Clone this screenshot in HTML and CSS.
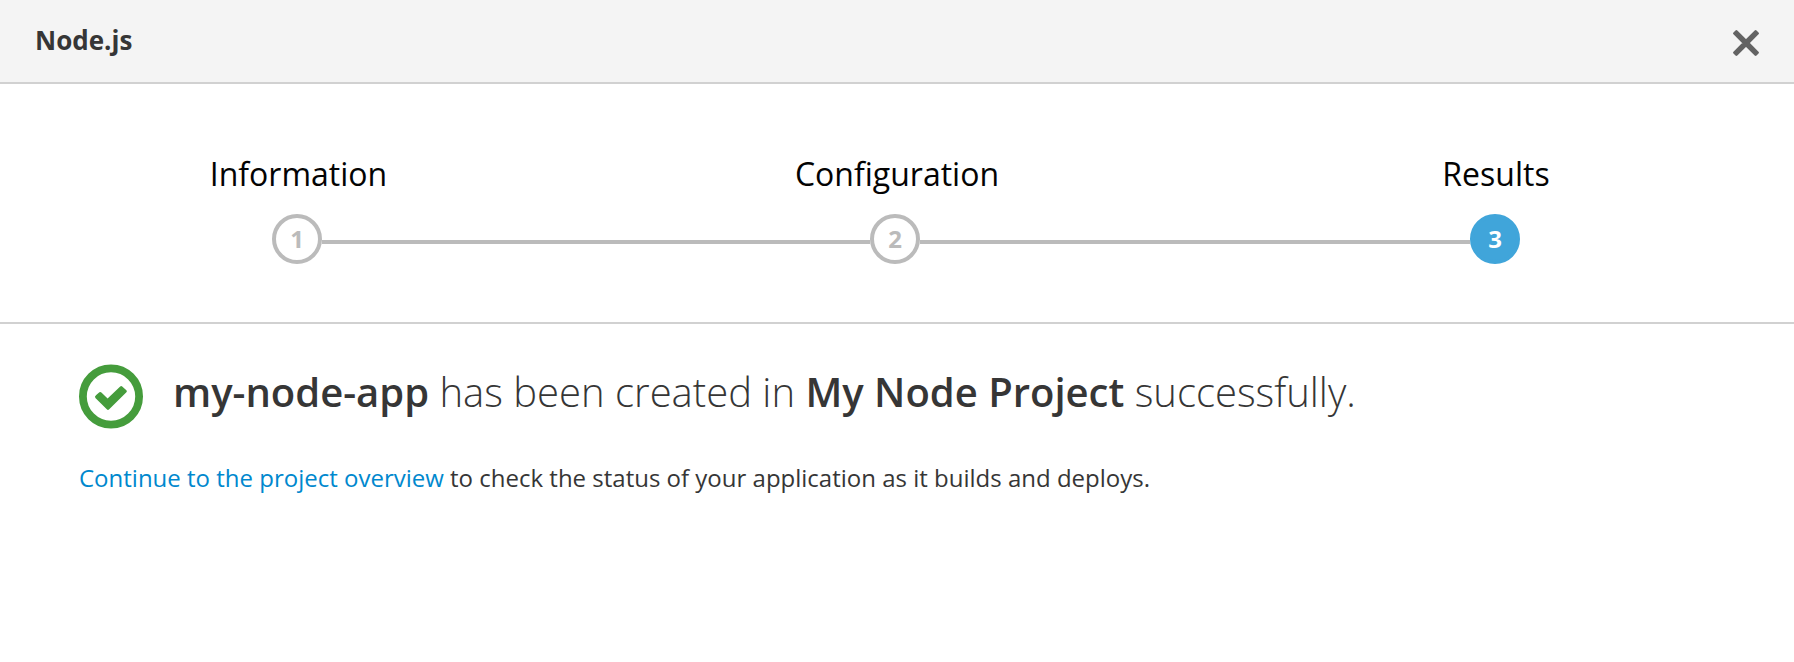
FILE: index.html
```html
<!DOCTYPE html>
<html lang="en">
<head>
<meta charset="utf-8">
<title>Node.js</title>
<link rel="stylesheet" href="styles.css">
</head>
<body>
<div class="modal">
  <header class="modal-header">
    <h1 class="modal-title">Node.js</h1>
    <button class="close" aria-label="Close">
      <svg width="26" height="26" viewBox="0 0 26 26"><path d="M3.4 1.4L13 11L22.600 1.400L24.600 3.400L15 13L24.600 22.600L22.600 24.600L13 15L3.400 24.600L1.400 22.600L11 13L1.400 3.400Z" fill="#636363" stroke="#636363" stroke-width="2.600" stroke-linejoin="round"/></svg>
    </button>
  </header>
  <ol class="steps">
    <li class="step first">
      <span class="step-label">Information</span>
      <div class="track"><i></i><span class="badge">1</span><i class="line"></i></div>
    </li>
    <li class="step">
      <span class="step-label">Configuration</span>
      <div class="track"><i class="line"></i><span class="badge">2</span><i class="line"></i></div>
    </li>
    <li class="step active">
      <span class="step-label">Results</span>
      <div class="track"><i class="line"></i><span class="badge">3</span><i></i></div>
    </li>
  </ol>
  <main class="results">
    <div class="message">
      <svg class="ok" width="64" height="65" viewBox="0 -0.5 64 65">
        <circle cx="32" cy="32" r="28.1" fill="none" stroke="#459c3c" stroke-width="7.8"/>
        <path d="M17.2 30.6L20.4 27.8Q21.4 27 22.4 27.9L28.6 34L41.2 21.9Q42.2 21 43.2 21.9L47.4 25.8Q48.4 26.8 47.4 27.8L30.2 44.8Q29 46 27.8 44.8L16.4 33.6Q15.2 32.2 17.2 30.6Z" fill="#459c3c"/>
      </svg>
      <h2 class="heading"><strong>my-node-app</strong> has been created in <strong>My Node Project</strong> successfully.</h2>
    </div>
    <p class="next"><a href="#">Continue to the project overview</a> to check the status of your application as it builds and deploys.</p>
  </main>
</div>
</body>
</html>
```
FILE: styles.css
```css
* { box-sizing: border-box; }
body {
  margin: 0;
  background: #fff;
  color: #363636;
  font-family: "Open Sans", sans-serif;
}
.modal { height: 662px; overflow: hidden; }
.modal-header {
  display: flex;
  justify-content: space-between;
  align-items: flex-start;
  height: 84px;
  padding: 22px 35px 0 35px;
  background: #f4f4f4;
  border-bottom: 2px solid #d1d1d1;
}
.modal-title {
  margin: 0;
  font-size: 26px;
  line-height: 36px;
  font-weight: 700;
}
.close {
  display: flex;
  margin: 7.5px 0 0;
  padding: 0;
  border: 0;
  background: none;
}
.steps {
  display: grid;
  grid-template-columns: repeat(3, 1fr);
  height: 240px;
  margin: 0;
  padding: 68px 0 0;
  list-style: none;
  border-bottom: 2px solid #d1d1d1;
}
.step-label {
  display: block;
  height: 62px;
  color: #030303;
  font-size: 32px;
  line-height: 44px;
  text-align: center;
}
.first .step-label { padding-right: 1px; }
.active .step-label { padding-left: 2px; }
.track {
  display: grid;
  grid-template-columns: 272px 50px 1fr;
}
.line {
  height: 4px;
  margin-top: 26px;
  background: #bbb;
}
.badge {
  height: 50px;
  border: 4px solid #bbb;
  border-radius: 50%;
  color: #bbb;
  font-size: 24px;
  line-height: 42px;
  font-weight: 700;
  text-align: center;
}
.active .track { grid-template-columns: 274px 50px 1fr; }
.active .badge {
  background: #40a5da;
  border-color: #40a5da;
  color: #fff;
}
.results { padding: 40px 79px; }
.message {
  display: flex;
  gap: 30px;
}
.ok { flex: none; }
.heading {
  margin: 0;
  font-size: 40px;
  line-height: 56px;
  font-weight: 300;
  white-space: nowrap;
}
.heading strong { font-weight: 600; }
.next {
  margin: 32px 0 0;
  font-size: 24px;
  line-height: 34px;
  white-space: nowrap;
}
.next a {
  color: #0088ce;
  text-decoration: none;
}
```
